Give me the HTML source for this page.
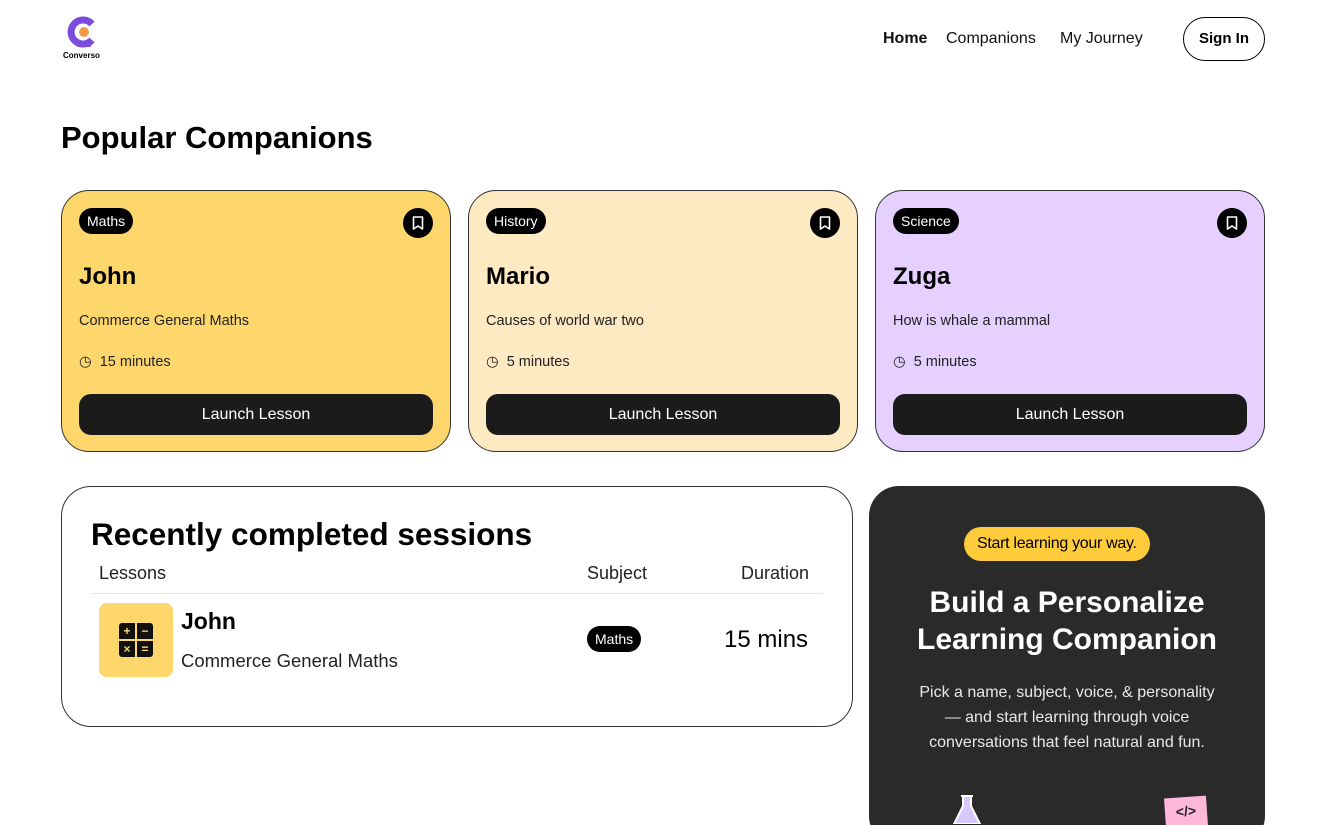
<!DOCTYPE html>
<html><head><meta charset="utf-8"><style>
*{box-sizing:border-box;margin:0;padding:0}
html,body{width:1326px;height:825px;overflow:hidden}
body{background:#fff;font-family:"Liberation Sans",sans-serif;color:#000;position:relative}
.abs{position:absolute}
.nav a{position:absolute;top:30px;font-size:16px;color:#111}
.card{position:absolute;top:190px;width:390px;height:262px;border:1px solid #333;border-radius:28px}
.tag{position:absolute;left:17px;top:17px;background:#000;color:#fff;font-size:14px;padding:5px 8px;border-radius:16px}
.bm{position:absolute;right:17px;top:17px;width:30px;height:30px;border-radius:50%;background:#000}
.bm svg{position:absolute;left:9px;top:8px}
.card h3{position:absolute;left:17px;top:72px;font-size:24px;font-weight:bold}
.card .d{position:absolute;left:17px;top:122px;font-size:14.5px;color:#222}
.card .t{position:absolute;left:17px;top:163px;font-size:14.5px;color:#222}
.card .b{position:absolute;left:17px;right:17px;top:203px;height:41px;background:#1b1b1b;border-radius:12px;color:#fff;font-size:16px;text-align:center;line-height:41px}
</style></head><body>
<svg class="abs" style="left:64px;top:16px" width="40" height="36" viewBox="0 0 40 36"><path d="M28 8 A12 12 0 1 0 28 24" stroke="#7c4ddc" stroke-width="7" fill="none"/><circle cx="20" cy="16" r="5" fill="#f59a4a"/><rect x="13" y="28" width="14" height="3" rx="1.5" fill="#7c4ddc"/></svg>
<div class="abs" style="left:63px;top:51px;font-size:8px;font-weight:bold">Converso</div>
<div class="nav"><a style="left:883px;font-weight:bold">Home</a><a style="left:946px">Companions</a><a style="left:1060px">My Journey</a></div>
<div class="abs" style="left:1183px;top:17px;width:82px;height:44px;border:1px solid #000;border-radius:22px;text-align:center;line-height:42px;font-size:15px;font-weight:bold">Sign In</div>
<div class="abs" style="left:61px;top:120px;font-size:31px;font-weight:bold">Popular Companions</div>

<div class="card" style="left:61px;background:#fed76c"><span class="tag">Maths</span><span class="bm"><svg width="12" height="14" viewBox="0 0 12 14"><path d="M1.5 1h9v12L6 10 1.5 13z" fill="none" stroke="#fff" stroke-width="1.6" stroke-linejoin="round"/></svg></span><h3>John</h3><div class="d">Commerce General Maths</div><div class="t">◷&nbsp; 15 minutes</div><div class="b">Launch Lesson</div></div>
<div class="card" style="left:468px;background:#fde9c2"><span class="tag">History</span><span class="bm"><svg width="12" height="14" viewBox="0 0 12 14"><path d="M1.5 1h9v12L6 10 1.5 13z" fill="none" stroke="#fff" stroke-width="1.6" stroke-linejoin="round"/></svg></span><h3>Mario</h3><div class="d">Causes of world war two</div><div class="t">◷&nbsp; 5 minutes</div><div class="b">Launch Lesson</div></div>
<div class="card" style="left:875px;background:#e5d0ff"><span class="tag">Science</span><span class="bm"><svg width="12" height="14" viewBox="0 0 12 14"><path d="M1.5 1h9v12L6 10 1.5 13z" fill="none" stroke="#fff" stroke-width="1.6" stroke-linejoin="round"/></svg></span><h3>Zuga</h3><div class="d">How is whale a mammal</div><div class="t">◷&nbsp; 5 minutes</div><div class="b">Launch Lesson</div></div>

<div class="abs" style="left:61px;top:486px;width:792px;height:241px;border:1px solid #333;border-radius:30px">
<div class="abs" style="left:29px;top:29px;font-size:31.5px;font-weight:bold">Recently completed sessions</div>
<div class="abs" style="left:37px;top:76px;font-size:18px;color:#222">Lessons</div>
<div class="abs" style="left:525px;top:76px;font-size:18px;color:#222">Subject</div>
<div class="abs" style="left:679px;top:76px;font-size:18px;color:#222">Duration</div>
<div class="abs" style="left:29px;top:106px;width:732px;border-top:1px solid #e5e5e5"></div>
<div class="abs" style="left:37px;top:116px;width:74px;height:74px;background:#fed76c;border-radius:8px"><div class="abs" style="left:20px;top:20px;width:34px;height:34px;display:grid;grid-template-columns:1fr 1fr;gap:2px;text-align:center;line-height:16px;color:#fed76c;font-size:12px;font-weight:bold"><span style="background:#111;border-radius:3px 0 0 0">+</span><span style="background:#111;border-radius:0 3px 0 0">−</span><span style="background:#111;border-radius:0 0 0 3px">×</span><span style="background:#111;border-radius:0 0 3px 0">=</span></div></div>
<div class="abs" style="left:119px;top:121px;font-size:23px;font-weight:bold">John</div>
<div class="abs" style="left:119px;top:163px;font-size:18.5px;color:#222">Commerce General Maths</div>
<div class="abs" style="left:525px;top:139px;background:#000;color:#fff;font-size:14px;padding:5px 8px;border-radius:16px">Maths</div>
<div class="abs" style="left:662px;top:139px;font-size:24px">15 mins</div>
</div>

<div class="abs" style="left:869px;top:486px;width:396px;height:360px;background:#2a2a2a;border-radius:30px;color:#fff;text-align:center">
<div class="abs" style="left:95px;top:41px;background:#fecb3b;color:#000;font-size:16px;padding:8px 13px;border-radius:18px;letter-spacing:-0.3px">Start learning your way.</div>
<div class="abs" style="left:0;right:0;top:98px;font-size:30px;font-weight:bold;line-height:37px">Build a Personalize<br>Learning Companion</div>
<div class="abs" style="left:0;right:0;top:194px;font-size:16px;line-height:25px;color:#e8e8e8">Pick a name, subject, voice, &amp; personality<br>— and start learning through voice<br>conversations that feel natural and fun.</div>
<svg class="abs" style="left:80px;top:308px" width="36" height="30"><path d="M12 2h12M14 2v10L5 30h26L22 12V2" stroke="#fff" stroke-width="2" fill="#d9c8ff"/></svg>
<div class="abs" style="left:296px;top:311px;width:42px;height:30px;background:#ffb8d8;transform:rotate(-4deg);color:#222;font-weight:bold;font-size:14px;line-height:28px">&lt;/&gt;</div>
</div>
</body></html>
